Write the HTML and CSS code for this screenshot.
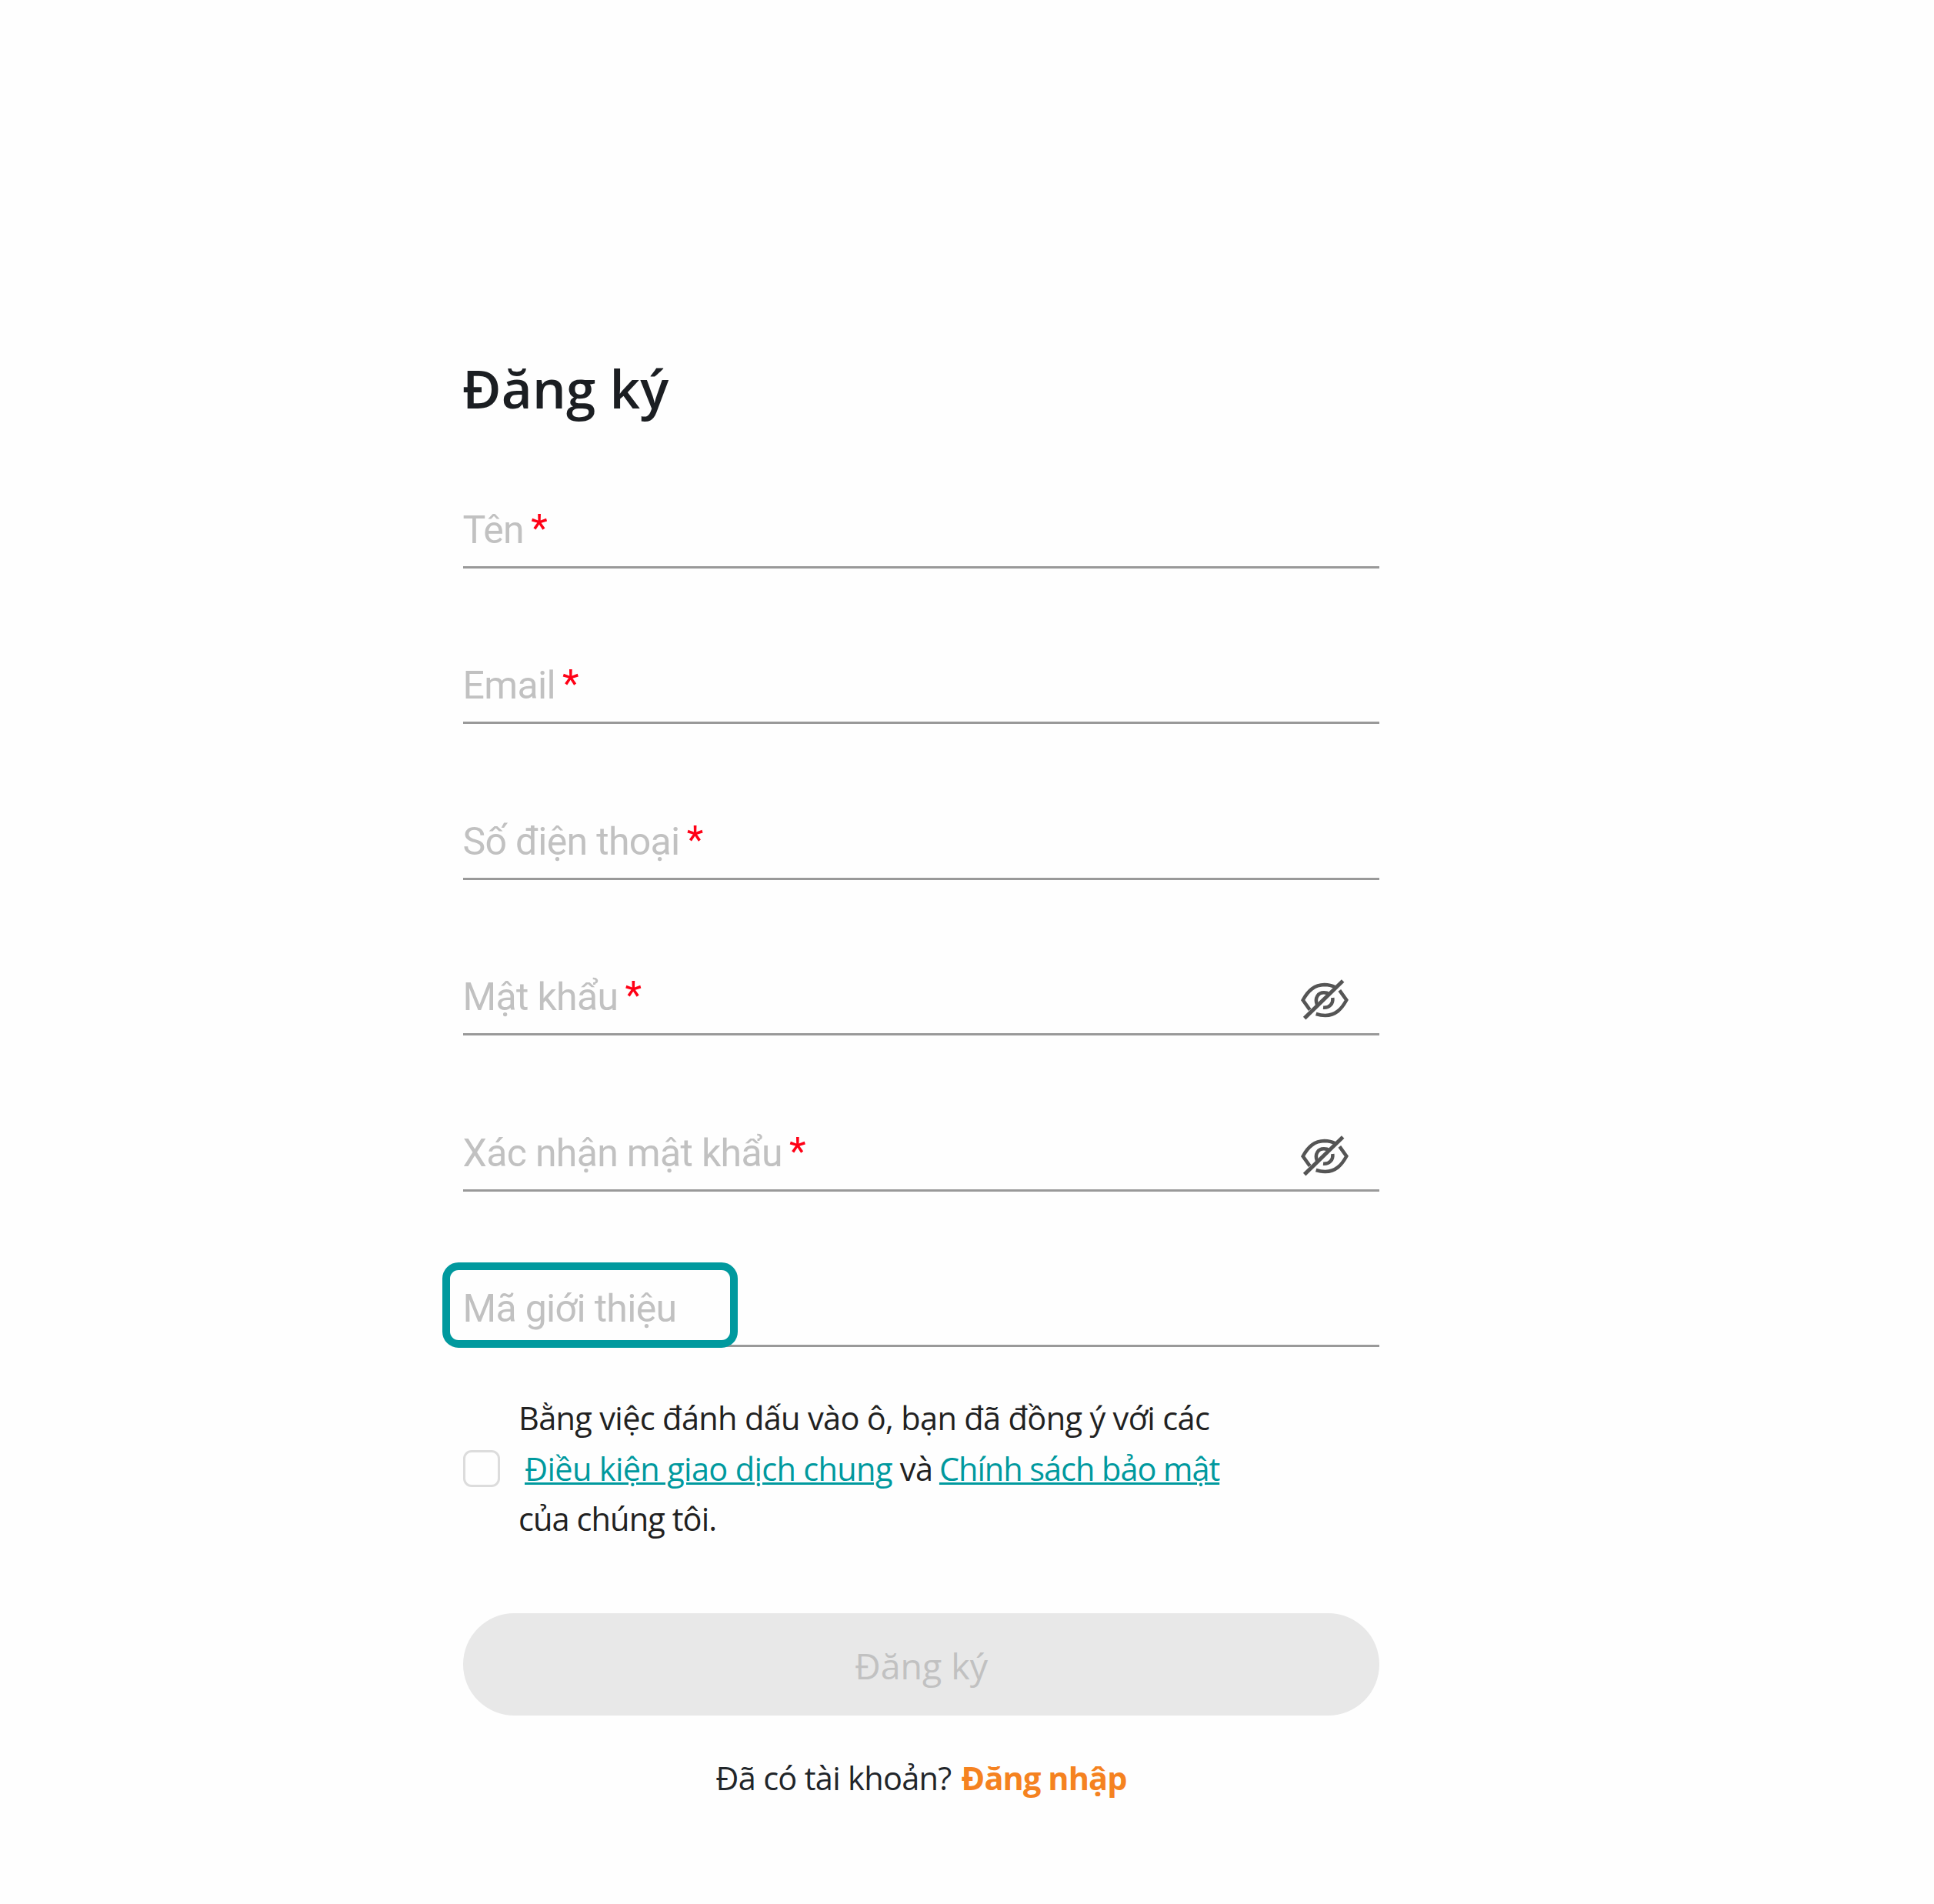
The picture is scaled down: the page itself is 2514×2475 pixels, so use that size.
FILE: index.html
```html
<!DOCTYPE html>
<html lang="vi">
<head>
<meta charset="utf-8">
<title>Đăng ký</title>
<link rel="stylesheet" href="styles.css">
</head>
<body>
<svg class="defs" width="0" height="0" aria-hidden="true">
  <symbol id="eye-off" viewBox="150 90 190 170">
    <path d="M188 218 L161 180 C182 142 206 121 245 120 C262 120 274 123 287 130"/>
    <path d="M304 142 L331 180 C311 216 289 239 248 240 C234 240 224 238 212 234"/>
    <path d="M216 198 C206 171 220 151 243 151 C252 151 258 153 263 157"/>
    <path d="M277 171 C280 194 264 211 240 209"/>
    <path d="M167 251 L317 105" stroke-width="15"/>
  </symbol>
</svg>
<main class="signup">
  <h1 class="title">Đăng ký</h1>
  <form class="fields">
    <label class="field"><span class="label">Tên <b class="req">*</b></span></label>
    <label class="field"><span class="label">Email <b class="req">*</b></span></label>
    <label class="field"><span class="label">Số điện thoại <b class="req">*</b></span></label>
    <label class="field"><span class="label">Mật khẩu <b class="req">*</b></span><svg class="eye"><use href="#eye-off"/></svg></label>
    <label class="field"><span class="label">Xác nhận mật khẩu <b class="req">*</b></span><svg class="eye"><use href="#eye-off"/></svg></label>
    <label class="field referral"><span class="label">Mã giới thiệu</span></label>
  </form>
  <div class="consent">
    <span class="checkbox"></span>
    <p class="terms">Bằng việc đánh dấu vào ô, bạn đã đồng ý với các<br><a class="link conditions">Điều kiện giao dịch chung</a> và <a class="link privacy">Chính sách bảo mật</a><br><span class="terms-end">của chúng tôi.</span></p>
  </div>
  <button class="submit" type="button">Đăng ký</button>
  <p class="login">Đã có tài khoản? <a class="login-link">Đăng nhập</a></p>
</main>
</body>
</html>
```
FILE: styles.css
```css
*, *::after { box-sizing: border-box; }
body {
  margin: 0;
  min-height: 2475px;
  background: #fefefe;
  color: #212529;
  font-family: "Open Sans", "Noto Sans", sans-serif;
}
.defs { position: absolute; }
.signup {
  width: 1191px;
  margin-left: 602px;
  padding-top: 457px;
}
.title {
  margin: 0 0 107.5px -1px;
  color: #1b1e22;
  font-size: 69px;
  font-weight: 600;
  line-height: 94px;
  letter-spacing: 0.2px;
}
.fields {
  display: flex;
  flex-direction: column;
  gap: 122.6px;
}
.field {
  position: relative;
  display: flex;
  justify-content: space-between;
  height: 80px;
  border-bottom: 3px solid #999;
}
.label {
  margin-left: -0.5px;
  color: #c1c1c1;
  font: 400 50px/60px Roboto, sans-serif;
  letter-spacing: -0.68px;
}
.req {
  margin-left: -2.5px;
  color: #ff0015;
  font-weight: 400;
  line-height: 1;
  vertical-align: 2px;
}
.eye {
  width: 63.3px;
  height: 56.7px;
  margin: 8px 40px 0 0;
  transform: translateY(-4px);
  fill: none;
  stroke: #555;
  stroke-width: 13.5;
}
.referral::after {
  content: "";
  position: absolute;
  left: -27px;
  top: -30.5px;
  width: 384px;
  height: 111px;
  border: 10px solid #00999e;
  border-radius: 21px;
}
.consent {
  display: flex;
  align-items: center;
  gap: 24px;
  margin-top: 59px;
}
.checkbox {
  width: 48px;
  height: 48px;
  border: 3px solid #dcdcdc;
  border-radius: 11px;
}
.terms {
  margin: 0;
  padding-top: 1px;
  color: #212121;
  font-size: 41.5px;
  line-height: 65.5px;
  letter-spacing: -0.67px;
  white-space: nowrap;
}
.link {
  color: #00999e;
  text-decoration: underline;
  text-decoration-thickness: 3px;
}
.conditions { margin-left: 8px; }
.privacy {
  margin-left: -1.5px;
  letter-spacing: -1.05px;
}
.terms-end { letter-spacing: -0.9px; }
.submit {
  display: block;
  width: 100%;
  height: 133px;
  margin-top: 89.5px;
  padding: 4px 0 0;
  border: 0;
  border-radius: 67px;
  background: #e8e8e8;
  color: #c1c1c1;
  font: 400 46.5px/129px "Open Sans", "Noto Sans", sans-serif;
}
.login {
  margin: 51px 0 0;
  font-size: 41.5px;
  line-height: 60px;
  letter-spacing: -0.7px;
  text-align: center;
}
.login-link {
  margin-left: 3px;
  color: #f58220;
  font-weight: 700;
  letter-spacing: -0.9px;
}
```
